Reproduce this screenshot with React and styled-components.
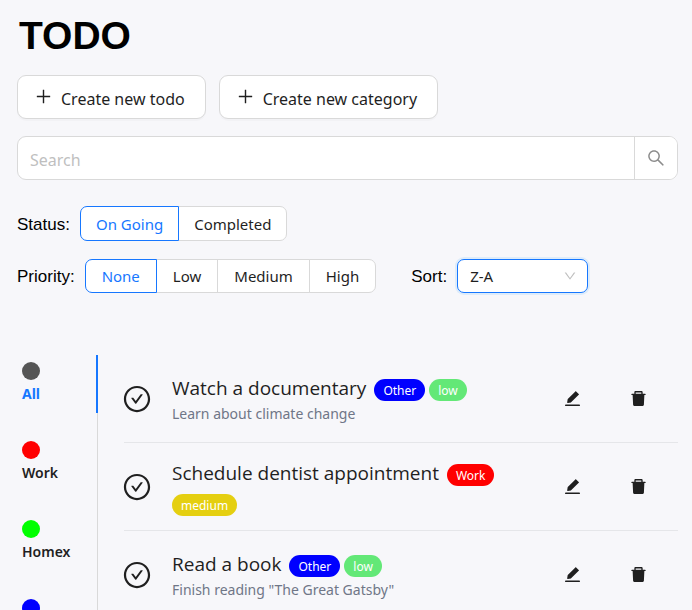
import React, { useState } from "react";
import styled, { createGlobalStyle, css } from "styled-components";
import {
  AiOutlinePlus,
  AiOutlineSearch,
  AiOutlineDown,
  AiOutlineCheckCircle,
  AiFillEdit,
  AiFillDelete,
} from "react-icons/ai";

const uiFont = '"Segoe UI", "Noto Sans", "Open Sans", sans-serif';
const headingFont = '"Segoe UI", "Open Sans", sans-serif';
const labelFont = '"Liberation Sans", Arial, sans-serif';
const blue = "#1677ff";
const ink = "#1f1f1f";
const line = "#d9d9d9";

const GlobalStyle = createGlobalStyle`
  *, *::before, *::after { box-sizing: border-box; }
  body {
    margin: 0;
    background: #f7f7fa;
    color: ${ink};
    font-family: ${uiFont};
  }
  button, input, select { font-family: inherit; color: inherit; }
`;

const Page = styled.main`
  height: 100vh;
  overflow: hidden;
  padding: 12px 14px 0 17px;
`;

const Title = styled.h1`
  margin: 0 0 15px;
  padding-left: 2px;
  font: bold 39px/48px ${labelFont};
  color: #000;
`;

const Toolbar = styled.div`
  display: flex;
  gap: 13px;
  margin-bottom: 17px;
`;

const CreateButton = styled.button`
  display: flex;
  align-items: center;
  gap: 8px;
  height: 44px;
  padding: 0 20px 0 16px;
  border: 1px solid ${line};
  border-radius: 9px;
  background: #fff;
  box-shadow: 0 2px 0 rgba(0, 0, 0, 0.02);
  font-size: 16px;
  line-height: 24px;

  svg {
    width: 19px;
    height: 19px;
    margin-bottom: 1px;
  }
  span { padding-top: 3px; }
`;

const SearchBar = styled.form`
  display: flex;
  height: 44px;
  margin-bottom: 26px;
  border: 1px solid ${line};
  border-radius: 9px;
  background: #fff;
  overflow: hidden;
`;

const SearchInput = styled.input`
  flex: 1;
  min-width: 0;
  padding: 4px 12px 0;
  border: 0;
  outline: 0;
  background: transparent;
  font-size: 16px;

  &::placeholder { color: #bfbfbf; opacity: 1; }
`;

const SearchButton = styled.button`
  display: grid;
  place-items: center;
  width: 43px;
  padding: 0;
  border: 0;
  border-left: 1px solid ${line};
  background: #fff;
  color: #8c8c8c;

  svg { width: 20px; height: 20px; }
`;

const FilterRow = styled.div`
  display: flex;
  flex-wrap: wrap;
  align-items: center;
  gap: 18px 35px;
  margin-bottom: 18px;
`;

const Field = styled.div`
  display: flex;
  align-items: center;
  gap: 10px;
`;

const FieldLabel = styled.label`
  padding-top: 2px;
  color: #000;
  font: 17px/24px ${labelFont};
`;

const Segments = styled.div`
  display: flex;
`;

const Segment = styled.label`
  position: relative;
  height: ${({ $height }) => $height}px;
  padding: 0 ${({ $pad }) => $pad}px;
  margin-left: -1px;
  border: 1px solid ${line};
  background: #fff;
  font-size: 15px;
  line-height: ${({ $height }) => $height - 1}px;

  &:first-child {
    margin-left: 0;
    border-radius: 7px 0 0 7px;
  }
  &:last-child { border-radius: 0 7px 7px 0; }

  ${({ $active }) =>
    $active &&
    css`
      z-index: 1;
      border-color: ${blue};
      color: ${blue};
    `}

  input {
    position: absolute;
    inset: 0;
    margin: 0;
    opacity: 0;
  }
`;

const SelectBox = styled.div`
  position: relative;
  width: 131px;

  svg {
    position: absolute;
    top: 10px;
    right: 11px;
    width: 14px;
    height: 14px;
    color: #bfbfbf;
    pointer-events: none;
  }
`;

const Select = styled.select`
  display: block;
  width: 100%;
  height: 34px;
  padding: 0 30px 0 12px;
  border: 1px solid ${blue};
  border-radius: 7px;
  outline: 0;
  background: #fff;
  box-shadow: 0 0 0 2px rgba(5, 145, 255, 0.1);
  appearance: none;
  font-size: 15px;
`;

const Content = styled.div`
  display: flex;
  align-items: flex-start;
  margin-top: 62px;
`;

const CategoryTabs = styled.div`
  display: flex;
  flex-direction: column;
  flex: none;
  gap: 21px;
  width: 81px;
  min-height: 320px;
  border-right: 1px solid ${line};
`;

const CategoryTab = styled.button`
  display: flex;
  flex-direction: column;
  align-items: flex-start;
  height: 58px;
  margin-right: -1px;
  padding: 7px 0 0 5px;
  border: 0;
  border-right: 2px solid ${({ $active }) => ($active ? blue : "transparent")};
  background: transparent;
  color: ${({ $active }) => ($active ? blue : ink)};
  font-size: 14px;
  font-weight: ${({ $active }) => ($active ? 700 : 600)};
  line-height: 27px;
`;

const Dot = styled.i`
  width: 18px;
  height: 18px;
  border-radius: 50%;
  background: ${({ $color }) => $color};
`;

const TodoList = styled.ul`
  flex: 1;
  min-width: 0;
  margin: 0;
  padding: 0 0 0 26px;
  list-style: none;
`;

const TodoItem = styled.li`
  display: flex;
  align-items: center;
  height: 88px;
  border-bottom: 1px solid #e5e6e9;
`;

const IconButton = styled.button`
  display: flex;
  align-items: center;
  justify-content: center;
  flex: none;
  width: ${({ $width }) => $width}px;
  height: 32px;
  padding: 0;
  border: 0;
  background: transparent;

  svg {
    flex: none;
    width: ${({ $size }) => $size}px;
    height: ${({ $size }) => $size}px;
  }
`;

const TodoBody = styled.div`
  flex: 1;
  min-width: 0;
  padding: 1px 0 0 22px;
`;

const TodoHeading = styled.div`
  display: flex;
  flex-wrap: wrap;
  align-items: center;
  gap: 3px 4px;
`;

const TodoName = styled.h2`
  margin: 0 4px 0 0;
  font: 400 19px/28px ${headingFont};
`;

const Tag = styled.span`
  height: 22px;
  margin-top: 4px;
  padding: 1px 9px 0;
  border-radius: 11px;
  background: ${({ $color }) => $color};
  color: #fff;
  font-size: 12px;
  line-height: 22px;
`;

const Note = styled.p`
  margin: 1px 0 0;
  color: #6f7687;
  font-size: 14px;
  line-height: 22px;
`;

const Actions = styled.div`
  display: flex;
  flex: none;
  padding-right: 7px;
`;

const categories = [
  { name: "All", color: "#555" },
  { name: "Work", color: "#f00" },
  { name: "Homex", color: "#0f0" },
  { name: "Other", color: "#00f" },
];

const tags = {
  Other: "#00f",
  Work: "#f00",
  low: "#63e877",
  medium: "#e5cf10",
};

const todos = [
  { name: "Watch a documentary", tags: ["Other", "low"], note: "Learn about climate change" },
  { name: "Schedule dentist appointment", tags: ["Work", "medium"] },
  { name: "Read a book", tags: ["Other", "low"], note: 'Finish reading "The Great Gatsby"' },
];

function SegmentedField({ label, name, options, height, pad }) {
  const [value, setValue] = useState(options[0]);
  return (
    <Field role="radiogroup" aria-labelledby={`${name}-label`}>
      <FieldLabel as="span" id={`${name}-label`}>{label}</FieldLabel>
      <Segments>
        {options.map((option) => (
          <Segment key={option} $active={option === value} $height={height} $pad={pad}>
            <input
              type="radio"
              name={name}
              checked={option === value}
              onChange={() => setValue(option)}
            />
            {option}
          </Segment>
        ))}
      </Segments>
    </Field>
  );
}

export default function App() {
  const [category, setCategory] = useState("All");
  return (
    <>
      <GlobalStyle />
      <Page>
        <Title>TODO</Title>
        <Toolbar>
          <CreateButton type="button"><AiOutlinePlus /><span>Create new todo</span></CreateButton>
          <CreateButton type="button"><AiOutlinePlus /><span>Create new category</span></CreateButton>
        </Toolbar>
        <SearchBar role="search" onSubmit={(e) => e.preventDefault()}>
          <SearchInput type="text" placeholder="Search" aria-label="Search" />
          <SearchButton type="submit" aria-label="Search"><AiOutlineSearch /></SearchButton>
        </SearchBar>
        <FilterRow>
          <SegmentedField label="Status:" name="status" options={["On Going", "Completed"]} height={35} pad={15} />
        </FilterRow>
        <FilterRow>
          <SegmentedField label="Priority:" name="priority" options={["None", "Low", "Medium", "High"]} height={34} pad={16} />
          <Field>
            <FieldLabel htmlFor="sort">Sort:</FieldLabel>
            <SelectBox>
              <Select id="sort" defaultValue="Z-A">
                <option>A-Z</option>
                <option>Z-A</option>
              </Select>
              <AiOutlineDown />
            </SelectBox>
          </Field>
        </FilterRow>
        <Content>
          <CategoryTabs role="tablist" aria-orientation="vertical">
            {categories.map(({ name, color }) => (
              <CategoryTab
                key={name}
                type="button"
                role="tab"
                aria-selected={name === category}
                $active={name === category}
                onClick={() => setCategory(name)}
              >
                <Dot $color={color} />
                {name}
              </CategoryTab>
            ))}
          </CategoryTabs>
          <TodoList>
            {todos.map((todo) => (
              <TodoItem key={todo.name}>
                <IconButton type="button" aria-label="Complete" $width={26} $size={30}>
                  <AiOutlineCheckCircle />
                </IconButton>
                <TodoBody>
                  <TodoHeading>
                    <TodoName>{todo.name}</TodoName>
                    {todo.tags.map((tag) => (
                      <Tag key={tag} $color={tags[tag]}>{tag}</Tag>
                    ))}
                  </TodoHeading>
                  {todo.note && <Note>{todo.note}</Note>}
                </TodoBody>
                <Actions>
                  <IconButton type="button" aria-label="Edit" $width={66} $size={19}><AiFillEdit /></IconButton>
                  <IconButton type="button" aria-label="Delete" $width={66} $size={19}><AiFillDelete /></IconButton>
                </Actions>
              </TodoItem>
            ))}
          </TodoList>
        </Content>
      </Page>
    </>
  );
}
